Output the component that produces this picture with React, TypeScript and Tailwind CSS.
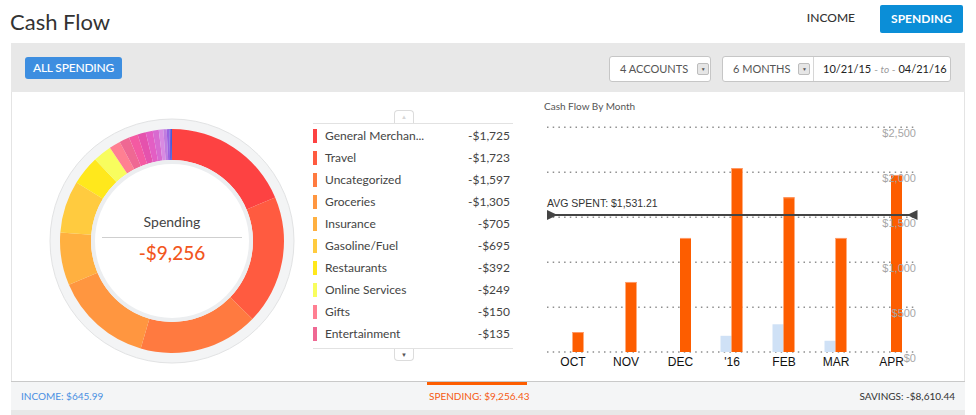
import React from "react";

const segments: [number, string][] = [
  [1725, "#fd4242"],
  [1723, "#ff5b40"],
  [1597, "#ff7a40"],
  [1305, "#ff9640"],
  [705, "#ffb040"],
  [695, "#ffcb3f"],
  [392, "#ffe81c"],
  [249, "#f8fd5e"],
  [150, "#ff7f92"],
  [135, "#ef6893"],
  [120, "#f45aa2"],
  [110, "#e552ad"],
  [95, "#e35ec4"],
  [80, "#d86ad0"],
  [60, "#d88ae2"],
  [45, "#c07ce0"],
  [35, "#9a62e0"],
  [20, "#6a58dc"],
  [15, "#3f62d8"],
];

const legend: [string, string, string][] = [
  ["General Merchan...", "-$1,725", "#fd4242"],
  ["Travel", "-$1,723", "#ff5b40"],
  ["Uncategorized", "-$1,597", "#ff7a40"],
  ["Groceries", "-$1,305", "#ff9640"],
  ["Insurance", "-$705", "#ffb040"],
  ["Gasoline/Fuel", "-$695", "#ffcb3f"],
  ["Restaurants", "-$392", "#ffe81c"],
  ["Online Services", "-$249", "#f8fd5e"],
  ["Gifts", "-$150", "#ff7f92"],
  ["Entertainment", "-$135", "#ef6893"],
];

// month, center x, spending, income (chart coords, 0.09px per dollar)
const months: [string, number, number, number][] = [
  ["OCT", 41.5, 222, 0],
  ["NOV", 94.5, 778, 0],
  ["DEC", 149, 1267, 0],
  ["'16", 200.5, 2044, 180],
  ["FEB", 252.5, 1719, 308],
  ["MAR", 304.5, 1267, 125],
  ["APR", 360, 1967, 0],
];

function arcPath(a0: number, a1: number, r0: number, r1: number) {
  const c = 125;
  const p = (a: number, r: number) => `${(c + r * Math.sin(a)).toFixed(2)} ${(c - r * Math.cos(a)).toFixed(2)}`;
  const large = a1 - a0 > Math.PI ? 1 : 0;
  return `M ${p(a0, r1)} A ${r1} ${r1} 0 ${large} 1 ${p(a1, r1)} L ${p(a1, r0)} A ${r0} ${r0} 0 ${large} 0 ${p(a0, r0)} Z`;
}

function Donut() {
  const total = segments.reduce((s, [v]) => s + v, 0);
  let acc = 0;
  return (
    <div className="relative w-[250px] h-[250px] shrink-0">
      <svg width="250" height="250" viewBox="0 0 250 250">
        <circle cx="125" cy="125" r="122" fill="#f3f4f5" stroke="#e2e3e4" strokeWidth="1" />
        {segments.map(([v, color], i) => {
          const a0 = (acc / total) * Math.PI * 2;
          acc += v;
          const a1 = (acc / total) * Math.PI * 2;
          return <path key={i} d={arcPath(a0, a1, 81, 112)} fill={color} />;
        })}
        <circle cx="125" cy="125" r="79" fill="#ffffff" stroke="#eceef0" strokeWidth="4" />
      </svg>
      {/* centre label */}
      <div className="absolute inset-0 flex flex-col items-center justify-center pb-[4px]">
        <div className="text-[14px] text-[#444] leading-[18px]">Spending</div>
        <div className="w-[140px] h-px bg-[#cfcfcf] mt-[6px]" />
        <div className="text-[19px] font-medium text-[#f2561d] leading-[24px] mt-[3px]">-$9,256</div>
      </div>
    </div>
  );
}

function Legend() {
  return (
    <div className="w-[200px] shrink-0 mt-[18px]">
      <div className="ml-[81px] w-[20px] h-[13px] border border-b-0 border-[#dcdcdc] rounded-t-[4px] flex items-center justify-center">
        <span className="text-[6px] text-[#d6d6d6] leading-none">▲</span>
      </div>
      <div className="border-y border-[#e2e2e2] pt-[1px] pb-[3px]">
        {legend.map(([name, amt, color]) => (
          <div key={name} className="h-[22px] flex items-center pr-[3px]">
            <div className="w-[4px] h-[14px] shrink-0" style={{ background: color }} />
            <div className="ml-[8px] flex-1 text-[12px] text-[#444] whitespace-nowrap">{name}</div>
            <div className="text-[12px] text-[#444]">{amt}</div>
          </div>
        ))}
      </div>
      <div className="ml-[81px] w-[20px] h-[12px] border border-t-0 border-[#dcdcdc] rounded-b-[4px] flex items-center justify-center">
        <span className="text-[6px] text-[#555] leading-none">▼</span>
      </div>
    </div>
  );
}

function Chart() {
  const grid = [35.3, 80.3, 125.3, 170.3, 215.3, 260];
  const labels = ["$2,500", "$2,000", "$1,500", "$1,000", "$500", "$0"];
  const base = 260;
  const k = 0.09;
  return (
    <svg width="434" height="289" viewBox="0 0 434 289" className="shrink-0">
      <text x="13" y="18" fontSize="10" fill="#555" fontFamily="Lato, sans-serif">
        Cash Flow By Month
      </text>
      {grid.map((y, i) => (
        <line key={i} x1="16" x2="384" y1={y} y2={y} stroke="#8f8f8f" strokeWidth="1.5" strokeDasharray="1.5 4.2" />
      ))}
      {months.map(([m, cx, spend, inc]) => (
        <g key={m}>
          {inc > 0 && <rect x={cx - 11} y={base - inc * k} width="11" height={inc * k} fill="#cfe1f6" />}
          <rect x={cx} y={base - spend * k} width="11" height={spend * k} fill="#fd5d00" />
          <rect x={cx} y={base - spend * k} width="11" height="1" fill="#ff9a66" />
        </g>
      ))}
      {labels.map((l, i) => (
        <text
          key={l}
          x="385"
          y={i === 5 ? 269.7 : grid[i] + 10}
          fontSize="11"
          fill="#a6a6a6"
          textAnchor="end"
          fontFamily="Liberation Sans, Arial, sans-serif"
        >
          {l}
        </text>
      ))}
      <text x="16" y="115" fontSize="10.5" fill="#333" fontFamily="Liberation Sans, Arial, sans-serif">
        AVG SPENT: $1,531.21
      </text>
      <line x1="18" x2="384" y1="123" y2="123" stroke="#444" strokeWidth="2" />
      <polygon points="16,118 26.5,123 16,128" fill="#444" />
      <polygon points="386.5,118 376,123 386.5,128" fill="#444" />
      {months.map(([m, cx]) => (
        <text
          key={m}
          x={cx + 0.5}
          y="274"
          fontSize="12"
          fill="#111"
          textAnchor="middle"
          fontFamily="Liberation Sans, Arial, sans-serif"
        >
          {m}
        </text>
      ))}
    </svg>
  );
}

function Caret() {
  return (
    <span className="w-[12px] h-[12px] border border-[#bdbdbd] bg-[#e6e6e6] rounded-[2px] flex items-center justify-center">
      <span className="text-[5px] text-[#555] leading-none">▼</span>
    </span>
  );
}

export default function App() {
  return (
    <div className="w-[976px] h-[415px] bg-white overflow-hidden font-['Lato','Noto_Sans',sans-serif]">
      {/* Page header */}
      <div className="h-[43px] flex items-start">
        <div className="pl-[10px] pt-[9px] text-[22px] leading-[26px] text-[#333]">Cash Flow</div>
        <div className="ml-auto flex items-start mr-[13px]">
          <div className="mt-[11px] text-[12px] font-medium text-[#333] leading-[14px]">INCOME</div>
          <div className="ml-[25px] mt-[5px] w-[83px] h-[28px] bg-[#0b8ed7] rounded-[2px] flex items-center justify-center text-[12px] font-bold text-white">
            SPENDING
          </div>
        </div>
      </div>

      {/* Panel */}
      <div className="mx-[11px] w-[954px]">
        <div className="h-[49px] bg-[#e8e8e8] flex items-start px-[14px] pt-[13px]">
          <div className="mt-[1px] w-[97px] h-[22px] bg-[#3d8ee0] rounded-[3px] flex items-center justify-center text-[12px] font-medium text-white tracking-[-0.2px]">
            ALL SPENDING
          </div>
          <div className="ml-auto flex">
            <div className="w-[102px] h-[26px] bg-white border border-[#c6c6c6] rounded-[3px] flex items-center pl-[10px] gap-[9px]">
              <span className="text-[11px] text-[#555]">4 ACCOUNTS</span>
              <Caret />
            </div>
            <div className="ml-[11px] w-[229px] h-[26px] bg-white border border-[#c6c6c6] rounded-[3px] flex items-center">
              <div className="w-[91px] h-full flex items-center pl-[10px] gap-[8px] border-r border-[#d6d6d6]">
                <span className="text-[11px] text-[#555]">6 MONTHS</span>
                <Caret />
              </div>
              <div className="pl-[9px] flex items-center text-[11px] text-[#222]">
                <span>10/21/15</span>
                <span className="mx-[3px] text-[10px] text-[#999]">
                  - <span className="italic">to</span> -
                </span>
                <span>04/21/16</span>
              </div>
            </div>
          </div>
        </div>

        {/* Body */}
        <div className="h-[289px] bg-white border-x border-[#e4e4e4] flex items-start">
          <div className="ml-[35px] mt-[24px]">
            <Donut />
          </div>
          <div className="ml-[16px]">
            <Legend />
          </div>
          <div className="ml-[18px]">
            <Chart />
          </div>
        </div>

        {/* Footer totals */}
        <div className="h-[29px] bg-[#f4f5f6] border-t border-[#c9c9c9] flex items-center text-[10px] uppercase">
          <div className="w-[416px] pl-[10px] text-[#4a8fe2]">INCOME: $645.99</div>
          <div className="relative w-[100px] h-full flex items-center pl-[2px] text-[#f65a12] whitespace-nowrap">
            <div className="absolute left-0 top-0 w-full h-[3px] bg-[#fd5d00]" />
            SPENDING: $9,256.43
          </div>
          <div className="flex-1 text-right pr-[10px] text-[#333]">SAVINGS: -$8,610.44</div>
        </div>
        <div className="h-[5px] bg-[#e8e8e8]" />
      </div>
    </div>
  );
}
